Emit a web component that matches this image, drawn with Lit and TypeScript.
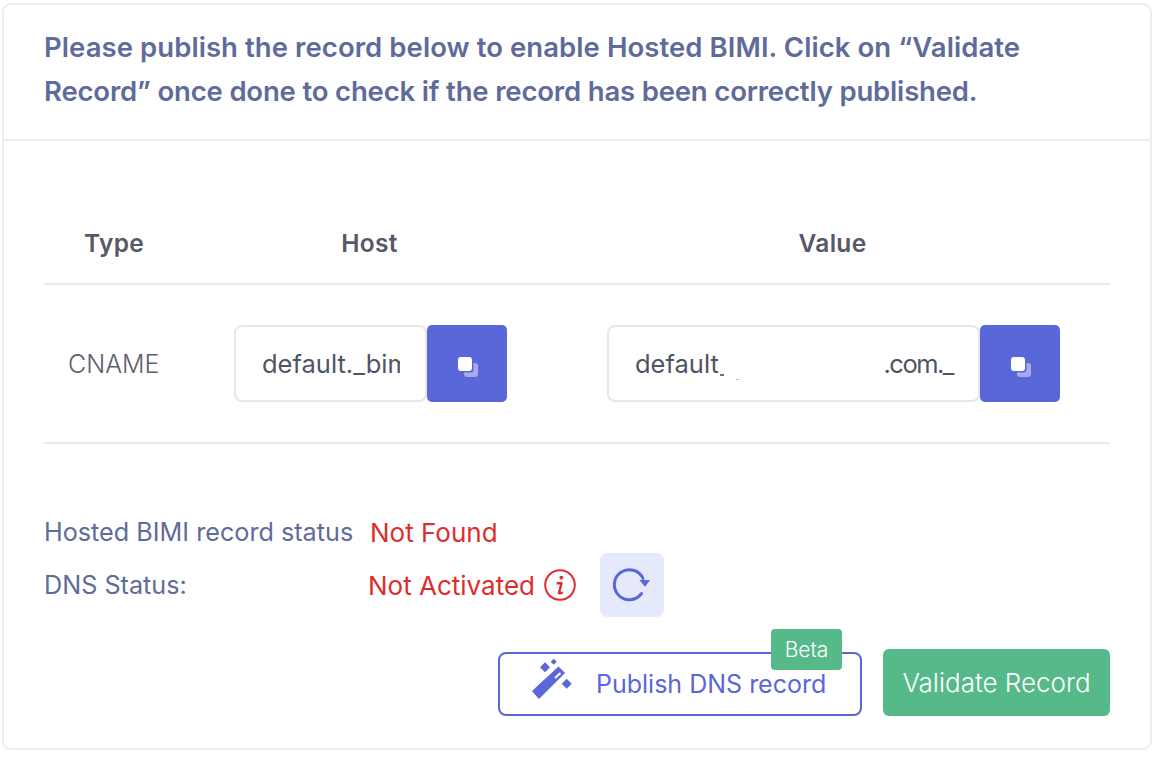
import { LitElement, html, css } from "lit";
import { customElement } from "lit/decorators.js";

const copyIcon = html`<svg class="copy" viewBox="0 0 22 22" width="22" height="22" aria-hidden="true">
  <rect x="7" y="7" width="14" height="14" rx="3" fill="#a5abec"></rect>
  <rect x="0" y="0" width="16.5" height="16.5" rx="3" fill="#5a67d8"></rect>
  <rect x="1" y="1" width="14" height="14" rx="3" fill="#fff"></rect>
</svg>`;

@customElement("app-root")
export class AppRoot extends LitElement {
  static styles = css`
    :host { display: block; width: 1162px; height: 762px; background: #fff; font-family: "Inter", "Noto Sans", sans-serif; color: #4f5463; padding: 3px 0 0 2px; box-sizing: border-box; }
    * { box-sizing: border-box; }
    .card { width: 1150px; height: 747px; border: 2px solid #ecedf3; border-radius: 9px; display: flex; flex-direction: column; }
    .head { height: 136px; border-bottom: 2px solid #ecedf3; padding: 20px 40px 0; font-size: 27.5px; line-height: 44px; font-weight: 600; color: #5f6b9a; letter-spacing: 0.07px; white-space: nowrap; }
    .line2 { letter-spacing: -0.17px; }
    .body { padding: 0 40px; flex: 1; display: flex; flex-direction: column; }
    .thead { display: grid; grid-template-columns: 140px 371px 555px; margin-top: 81px; height: 63px; border-bottom: 2px solid #e9eaef; font-size: 24.5px; font-weight: 600; color: #565966; text-align: center; line-height: 42px; letter-spacing: 0.3px; }
    .row { display: grid; grid-template-columns: 140px 371px 555px; height: 159px; border-bottom: 2px solid #e9eaef; align-items: center; font-size: 25.5px; }
    .type { padding-left: 24px; color: #5b6070; font-weight: 300; font-size: 25px; }
    .group { display: flex; height: 77px; }
    .g-host { padding-left: 50px; }
    .g-value { padding-left: 52px; }
    .field { border: 2px solid #e5e6ee; border-radius: 8px; padding: 0 25px 0 26px; display: flex; align-items: center; color: #4f5463; }
    .f-host { width: 193px; }
    .f-value { width: 373px; justify-content: space-between; white-space: nowrap; }
    .clip { overflow: hidden; white-space: nowrap; }
    .tight { letter-spacing: -1.5px; }
    .tail { display: inline-block; width: 4px; height: 1.5px; margin-left: 1px; vertical-align: -3px; background: #6d7280; }
    .speck { display: inline-block; width: 3px; height: 1px; margin-left: 12px; vertical-align: -7px; background: #b4b7c0; }
    .copy-btn { width: 80px; background: #5a67d8; border-radius: 5px; display: flex; align-items: center; justify-content: center; padding: 7px 0 0 2px; }
    .status { margin-top: 66px; font-size: 25.2px; color: #5f6b9a; }
    .s1 { display: flex; align-items: center; height: 44px; }
    .s1 .label { width: 326px; white-space: nowrap; }
    .bad { color: #dc2e2e; font-size: 26px; }
    .s2 { display: flex; align-items: center; height: 64px; margin-top: -1px; }
    .s2 .label { width: 324px; }
    .s2 .bad { width: 176px; white-space: nowrap; }
    .refresh { width: 64px; height: 64px; border-radius: 8px; background: #e6e9fb; margin-left: 24px; display: flex; align-items: center; justify-content: center; }
    .actions { display: flex; justify-content: flex-end; align-items: flex-end; margin-top: 32px; gap: 21px; font-size: 25px; }
    .publish { position: relative; width: 364px; height: 64px; border: 2px solid #5a67d8; border-radius: 8px; color: #5a67d8; display: flex; align-items: center; padding-left: 30px; }
    .publish span.t { margin-left: 22px; white-space: nowrap; }
    .beta { position: absolute; right: 18px; top: -25px; width: 71px; height: 41px; background: #55b98a; color: #fff; border-radius: 4px; font-size: 21px; display: flex; align-items: center; justify-content: center; font-weight: 300; }
    .validate { width: 227px; height: 67px; background: #55b98a; color: #fff; border-radius: 6px; display: flex; align-items: center; justify-content: center; font-weight: 300; font-size: 26px; white-space: nowrap; }
  `;

  render() {
    return html`
      <div class="card">
        <div class="head">Please publish the record below to enable Hosted BIMI. Click on “Validate<br /><span class="line2">Record” once done to check if the record has been correctly published.</span></div>
        <div class="body">
          <div class="thead"><div>Type</div><div>Host</div><div>Value</div></div>
          <div class="row">
            <div class="type">CNAME</div>
            <div class="group g-host">
              <div class="field f-host"><div class="clip">default._bimi</div></div>
              <div class="copy-btn">${copyIcon}</div>
            </div>
            <div class="group g-value">
              <div class="field f-value"><span>default<i class="tail"></i><i class="speck"></i></span><span class="tight">.com._</span></div>
              <div class="copy-btn">${copyIcon}</div>
            </div>
          </div>
          <div class="status">
            <div class="s1"><div class="label">Hosted BIMI record status</div><div class="bad">Not Found</div></div>
            <div class="s2">
              <div class="label">DNS Status:</div>
              <div class="bad">Not Activated</div>
              <svg class="info" width="32" height="32" viewBox="0 0 32 32" aria-hidden="true">
                <circle cx="16" cy="16" r="14.8" fill="none" stroke="#dc2e2e" stroke-width="2"></circle>
                <circle cx="17.3" cy="8.6" r="1.9" fill="#dc2e2e"></circle>
                <path d="M12.7 14.3h4.8l-2.6 9.8q2 .6 3.8-.8" fill="none" stroke="#dc2e2e" stroke-width="2.4" stroke-linejoin="round"></path>
              </svg>
              <div class="refresh">
                <svg width="40" height="40" viewBox="0 0 40 40" aria-hidden="true">
                  <path d="M29.5 28.5A15 15 0 1 1 31 13.5" fill="none" stroke="#5a67d8" stroke-width="3" stroke-linecap="round"></path>
                  <path d="M27.3 15H38L33 21.7Z" fill="#5a67d8"></path>
                </svg>
              </div>
            </div>
          </div>
          <div class="actions">
            <div class="publish">
              <svg width="44" height="50" viewBox="0 0 44 50" aria-hidden="true">
                <path d="M2.5 32L28.5 8L34.5 14L9 39.5Z" fill="#5a67d8" stroke="#5a67d8" stroke-linejoin="round"></path>
                <path d="M24.3 18.2L29.8 13.3L31.2 14.8L25.8 19.7Z" fill="#fff"></path>
                <path d="M15 3.2L20 8.2L15 13.2L10 8.2Z M23.7 -0.2L26.7 2.8L23.7 5.8L20.7 2.8Z M36.7 19.8L41.7 24.8L36.7 29.8L31.7 24.8Z" fill="#5a67d8"></path>
              </svg>
              <span class="t">Publish DNS record</span>
              <div class="beta">Beta</div>
            </div>
            <div class="validate">Validate Record</div>
          </div>
        </div>
      </div>
    `;
  }
}
